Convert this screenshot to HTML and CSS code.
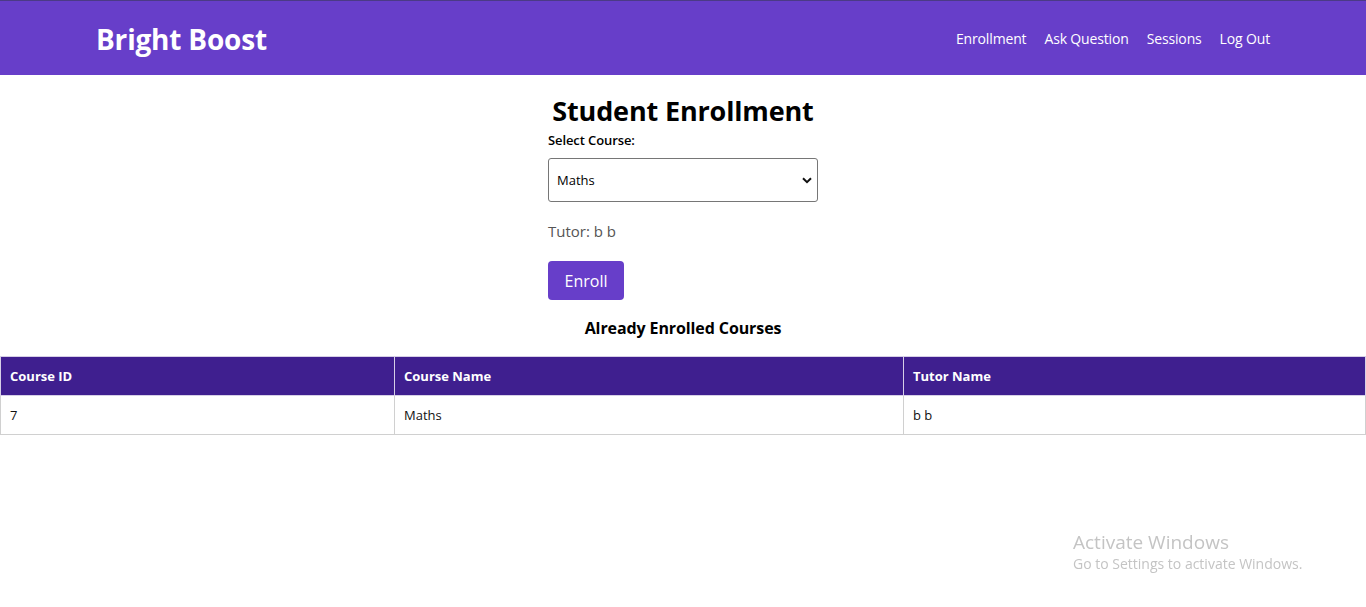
FILE: index.html
```html
<!DOCTYPE html>
<html>
<head>
<meta charset="utf-8">
<link rel="stylesheet" href="styles.css">
</head>
<body>
<header class="topbar">
  <div class="brand">Bright Boost</div>
  <nav class="nav">
    <a href="#">Enrollment</a>
    <a href="#">Ask Question</a>
    <a href="#">Sessions</a>
    <a href="#">Log Out</a>
  </nav>
</header>
<main class="content">
  <section class="form">
    <h2 class="title">Student Enrollment</h2>
    <label class="label">Select Course:</label>
    <div class="select">
      <span>Maths</span>
      <svg class="chev" width="10" height="7" viewBox="0 0 10 7"><path d="M1 1.2 L5 5.2 L9 1.2" fill="none" stroke="#111" stroke-width="2"/></svg>
    </div>
    <p class="tutor">Tutor: b b</p>
    <button class="btn">Enroll</button>
  </section>
  <h3 class="subtitle">Already Enrolled Courses</h3>
  <table class="courses">
    <colgroup><col class="c1"><col class="c2"><col class="c3"></colgroup>
    <thead>
      <tr><th>Course ID</th><th>Course Name</th><th>Tutor Name</th></tr>
    </thead>
    <tbody>
      <tr><td>7</td><td>Maths</td><td>b b</td></tr>
    </tbody>
  </table>
</main>
<div class="watermark">
  <div class="wm1">Activate Windows</div>
  <div class="wm2">Go to Settings to activate Windows.</div>
</div>
</body>
</html>
```

FILE: styles.css
```css
* { box-sizing: border-box; }
html, body { margin: 0; padding: 0; background: #fff; }
body { font-family: "Open Sans", "Noto Sans", sans-serif; color: #000; }

.topbar {
  height: 75px;
  background: #673ec9;
  border-top: 1px solid #4b3a86;
  display: flex;
  align-items: center;
  justify-content: space-between;
  padding: 0 96px 0 96px;
}
.brand {
  color: #fff;
  font-weight: 700;
  font-size: 28px;
  letter-spacing: -0.2px;
  margin-top: 1px;
}
.nav { display: flex; gap: 18px; }
.nav a {
  color: #fff;
  text-decoration: none;
  font-size: 14px;
  letter-spacing: -0.15px;
}

.content { display: flex; flex-direction: column; align-items: center; }
.form { width: 270px; display: flex; flex-direction: column; align-items: flex-start; }
.title {
  align-self: center;
  margin: 17px 0 0 0;
  font-size: 27px;
  font-weight: 700;
  line-height: 37px;
  white-space: nowrap;
  letter-spacing: -0.15px;
}
.label { font-size: 13px; font-weight: 600; margin-top: 2px; line-height: 18px; letter-spacing: -0.1px; }
.select {
  margin-top: 9px;
  width: 270px;
  height: 44px;
  border: 1px solid #767676;
  border-radius: 3px;
  display: flex;
  align-items: center;
  justify-content: space-between;
  padding: 0 5px 0 8px;
  font-size: 13px;
}
.tutor { margin: 19px 0 0 0; font-size: 15px; color: #555; line-height: 20px; }
.btn {
  margin-top: 20px;
  width: 76px;
  height: 39px;
  background: #673ec9;
  color: #fff;
  border: none;
  border-radius: 4px;
  font-family: inherit;
  font-size: 16px;
  padding: 0;
}
.subtitle { margin: 17px 0 17px 0; font-size: 16px; font-weight: 700; line-height: 22px; letter-spacing: -0.1px; }

.courses { width: 100%; border-collapse: collapse; table-layout: fixed; }
.c1 { width: 394px; }
.c2 { width: 509px; }
.courses th, .courses td {
  border: 1px solid #d0d0d0;
  height: 39px;
  padding: 0 9px;
  text-align: left;
  font-size: 13px;
}
.courses th { background: #3f1f8f; color: #fff; font-weight: 700; border-color: #d6cfe6; }
.courses td { color: #111; }

.watermark {
  position: fixed;
  left: 1073px;
  top: 530px;
  color: #c4c4c4;
  font-family: "Open Sans", sans-serif;
}
.wm1 { font-size: 19px; line-height: 24px; }
.wm2 { font-size: 14px; line-height: 20px; }
```
